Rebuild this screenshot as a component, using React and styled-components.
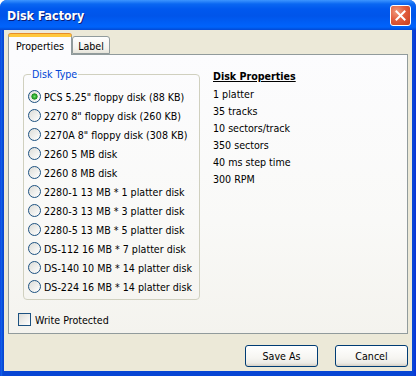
import React from "react";
import styled, { createGlobalStyle } from "styled-components";

const diskTypes = [
  "PCS 5.25\" floppy disk (88 KB)",
  "2270 8\" floppy disk (260 KB)",
  "2270A 8\" floppy disk (308 KB)",
  "2260 5 MB disk",
  "2260 8 MB disk",
  "2280-1 13 MB * 1 platter disk",
  "2280-3 13 MB * 3 platter disk",
  "2280-5 13 MB * 5 platter disk",
  "DS-112 16 MB * 7 platter disk",
  "DS-140 10 MB * 14 platter disk",
  "DS-224 16 MB * 14 platter disk",
];

const diskProps = [
  "1 platter",
  "35 tracks",
  "10 sectors/track",
  "350 sectors",
  "40 ms step time",
  "300 RPM",
];

const App = () => (
  <>
    <GlobalStyle />
    <Window>
      <TitleBar>
        <Title>Disk Factory</Title>
        <CloseButton>
          <svg width="11" height="11" viewBox="0 0 11 11">
            <path d="M1.5 1.5 L9.5 9.5 M9.5 1.5 L1.5 9.5" stroke="#fff" strokeWidth="2" strokeLinecap="square" />
          </svg>
        </CloseButton>
      </TitleBar>
      <Body>
        <TabRow>
          <Tab active width="64px">Properties</Tab>
          <Tab width="38px">Label</Tab>
        </TabRow>
        <Panel>
          <TopRow>
            <GroupBox>
              <Legend>Disk Type</Legend>
              {diskTypes.map((d, i) => (
                <RadioRow key={d}>
                  <Radio checked={i === 0} />
                  {d}
                </RadioRow>
              ))}
            </GroupBox>
            <PropsColumn>
              <PropsHeading>Disk Properties</PropsHeading>
              {diskProps.map(p => (
                <PropLine key={p}>{p}</PropLine>
              ))}
            </PropsColumn>
          </TopRow>
          <CheckRow>
            <CheckBox />
            Write Protected
          </CheckRow>
        </Panel>
        <Footer>
          <Button>Save As</Button>
          <Button>Cancel</Button>
        </Footer>
      </Body>
    </Window>
  </>
);

const uiFont = `"DejaVu Sans Condensed", "DejaVu Sans", sans-serif`;

const GlobalStyle = createGlobalStyle`
  body {
    margin: 0;
    background: #fff;
    font-family: ${uiFont};
    font-size: 10.6px;
  }
`;

const Window = styled.div`
  width: 416px;
  height: 376px;
  display: flex;
  flex-direction: column;
  border-radius: 7px 7px 0 0;
  overflow: hidden;
  background: linear-gradient(90deg, #0831d9 0, #166aee 1px, #0855dd 2px, #0846d4 3px, #0846d4 calc(100% - 3px), #0831d9 100%);
`;

const TitleBar = styled.div`
  height: 30px;
  flex-shrink: 0;
  display: flex;
  align-items: center;
  justify-content: space-between;
  padding: 0 5px 0 7px;
  background: linear-gradient(
    180deg,
    #3d95ff 0,
    #0a67f2 4px,
    #0058ee 9px,
    #0055ea 16px,
    #0060f8 24px,
    #0063fb 27px,
    #0052e0 29px,
    #0648d6 30px
  );
`;

const Title = styled.div`
  color: #fff;
  font-family: "DejaVu Sans Condensed", "DejaVu Sans", sans-serif;
  font-weight: bold;
  font-size: 12.3px;
  text-shadow: 1px 1px 0 #0a1e7a;
  margin-top: 1px;
`;

const CloseButton = styled.div`
  width: 21px;
  height: 21px;
  box-sizing: border-box;
  border: 1px solid #fff;
  border-radius: 3px;
  display: flex;
  align-items: center;
  justify-content: center;
  background: radial-gradient(circle at 30% 30%, #f09a7e 0, #e25d3d 45%, #c73d1c 100%);
  margin-top: 1px;
`;

const Body = styled.div`
  flex: 1;
  margin: 0 4px 5px 4px;
  background: #ece9d8;
  display: flex;
  flex-direction: column;
  padding: 4px;
  min-height: 0;
`;

const TabRow = styled.div`
  display: flex;
  align-items: flex-end;
  height: 20px;
  position: relative;
  z-index: 1;
`;

const Tab = styled.div`
  box-sizing: border-box;
  width: ${p => p.width};
  height: ${p => (p.active ? "21px" : "18px")};
  margin-bottom: ${p => (p.active ? "-1px" : "0")};
  display: flex;
  align-items: center;
  justify-content: center;
  padding-top: ${p => (p.active ? "0" : "1px")};
  color: #000;
  border: 1px solid #919b9c;
  border-bottom: ${p => (p.active ? "none" : "1px solid #919b9c")};
  border-top: ${p => (p.active ? "3px solid #ffc83c" : "1px solid #919b9c")};
  border-radius: 3px 3px 0 0;
  background: ${p =>
    p.active ? "#fcfcfe" : "linear-gradient(180deg, #fefefe 0, #f4f3ee 70%, #e6e4da 100%)"};
  box-shadow: ${p => (p.active ? "0 -1px 0 #e68b2c" : "none")};
`;

const Panel = styled.div`
  height: 280px;
  box-sizing: border-box;
  border: 1px solid #919b9c;
  background: linear-gradient(180deg, #fcfcfe 0, #f9f9f7 60%, #f4f3ee 100%);
  padding: 13px 0 0 9px;
  display: flex;
  flex-direction: column;
`;

const TopRow = styled.div`
  display: flex;
  align-items: flex-start;
  gap: 13px;
  padding-left: 5px;
`;

const GroupBox = styled.fieldset`
  margin: 0;
  width: 177px;
  box-sizing: border-box;
  border: 1px solid #d0d0bf;
  border-radius: 4px;
  padding: 6px 0 3px 4px;
  min-width: 0;
`;

const Legend = styled.legend`
  color: #0046d5;
  padding: 0 1px;
  margin-left: 3px;
  line-height: 13px;
`;

const RadioRow = styled.div`
  display: flex;
  align-items: center;
  gap: 3px;
  height: 19px;
  color: #000;
  white-space: nowrap;
`;

const Radio = styled.span`
  width: 13px;
  height: 13px;
  box-sizing: border-box;
  border-radius: 50%;
  border: 1px solid #1c5180;
  flex-shrink: 0;
  background: ${p =>
    p.checked
      ? "radial-gradient(circle, #6fe46f 0, #2ea72e 1.8px, #1d8f1d 2.8px, transparent 3.4px), linear-gradient(135deg, #dcdcd7 0, #fff 100%)"
      : "linear-gradient(135deg, #dcdcd7 0, #fff 100%)"};
`;

const PropsColumn = styled.div`
  display: flex;
  flex-direction: column;
  padding-top: 1px;
`;

const PropsHeading = styled.div`
  font-weight: bold;
  text-decoration: underline;
  line-height: 14px;
  margin-bottom: 3px;
`;

const PropLine = styled.div`
  line-height: 17px;
`;

const CheckRow = styled.div`
  display: flex;
  align-items: center;
  gap: 4px;
  margin-top: 13px;
  height: 13px;
`;

const CheckBox = styled.span`
  width: 13px;
  height: 13px;
  box-sizing: border-box;
  border: 1px solid #1c5180;
  background: linear-gradient(135deg, #dcdcd7 0, #fff 100%);
`;

const Footer = styled.div`
  display: flex;
  justify-content: flex-end;
  gap: 17px;
  padding-top: 11px;
`;

const Button = styled.button`
  width: 73px;
  height: 22px;
  box-sizing: border-box;
  font-family: ${uiFont};
  font-size: 10.6px;
  color: #000;
  border: 1px solid #003c74;
  border-radius: 3px;
  background: linear-gradient(180deg, #ffffff 0, #f6f5f1 60%, #ecebe6 85%, #d6d0c5 100%);
  padding: 0;
`;

export default App;
